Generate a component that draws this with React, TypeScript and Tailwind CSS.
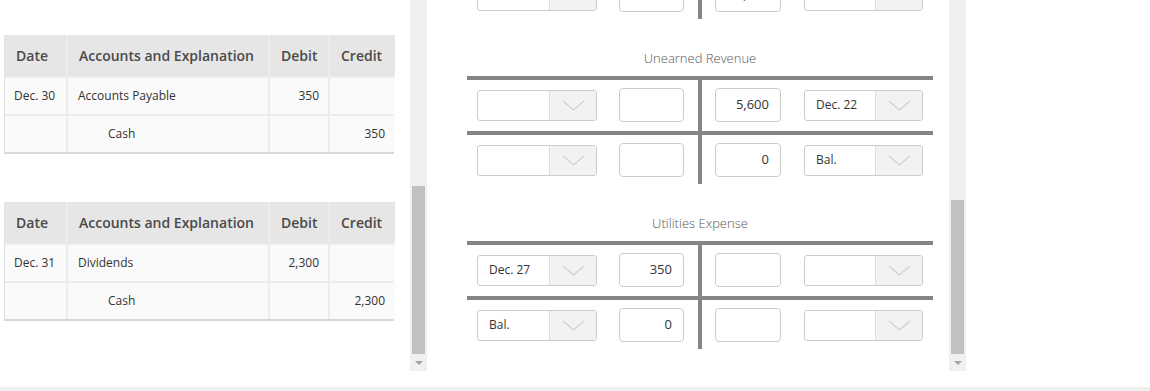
import React from "react";

type Entry = {
  date: string;
  account: string;
  debit: string;
  credit: string;
  indent?: boolean;
};

type TRow = {
  leftDate?: string;
  leftAmount?: string;
  rightAmount?: string;
  rightDate?: string;
};

const journal: Entry[][] = [
  [
    { date: "Dec. 30", account: "Accounts Payable", debit: "350", credit: "" },
    { date: "", account: "Cash", debit: "", credit: "350", indent: true },
  ],
  [
    { date: "Dec. 31", account: "Dividends", debit: "2,300", credit: "" },
    { date: "", account: "Cash", debit: "", credit: "2,300", indent: true },
  ],
];

// the first account is scrolled mostly out of view, only its last row peeks in
const accounts: { id: string; title: string; rows: TRow[] }[] = [
  {
    id: "cash",
    title: "",
    rows: [{}, { rightAmount: "5,600" }],
  },
  {
    id: "unearned",
    title: "Unearned Revenue",
    rows: [
      { rightAmount: "5,600", rightDate: "Dec. 22" },
      { rightAmount: "0", rightDate: "Bal." },
    ],
  },
  {
    id: "utilities",
    title: "Utilities Expense",
    rows: [
      { leftDate: "Dec. 27", leftAmount: "350" },
      { leftDate: "Bal.", leftAmount: "0" },
    ],
  },
];

const JournalTable = ({ entries }: { entries: Entry[] }) => (
  <div className="w-[390px] grid grid-cols-[61px_200px_58px_65px] gap-[2px] bg-[#ececec] border-l border-[#e2e2e2] border-b-2 border-b-[#d8d8d8]">
    {["Date", "Accounts and Explanation", "Debit", "Credit"].map((h) => (
      <div
        key={h}
        className="h-[41px] bg-[#e6e6e6] flex items-center px-[11px] text-[14px] font-semibold text-[#4a4a4a]"
      >
        {h}
      </div>
    ))}
    {entries.map((e, i) => (
      <React.Fragment key={i}>
        <div className="h-[36px] bg-[#fafafa] flex items-center pl-[9px] text-[12px] text-[#333]">{e.date}</div>
        <div
          className={`h-[36px] bg-[#fafafa] flex items-center text-[12px] text-[#333] ${e.indent ? "pl-[40px]" : "pl-[10px]"}`}
        >
          {e.account}
        </div>
        <div className="h-[36px] bg-[#fafafa] flex items-center justify-end pr-[9px] text-[12px] text-[#333]">{e.debit}</div>
        <div className="h-[36px] bg-[#fafafa] flex items-center justify-end pr-[10px] text-[12px] text-[#333]">{e.credit}</div>
      </React.Fragment>
    ))}
  </div>
);

const DateSelect = ({ value = "", width = "w-[120px]" }: { value?: string; width?: string }) => (
  <div className={`${width} h-[31px] flex border border-[#cccccc] rounded-[3px] bg-white overflow-hidden`}>
    <div className="flex-1 flex items-center pl-[11px] text-[12px] text-[#333]">{value}</div>
    <div className="w-[47px] bg-[#f2f2f2] border-l border-[#dddddd] flex items-center justify-center">
      <svg width="23" height="11" viewBox="0 0 23 11" fill="none">
        <polyline points="1,1 11.5,10 22,1" stroke="#cfcfcf" strokeWidth="1.1" />
      </svg>
    </div>
  </div>
);

const AmountBox = ({ value = "", width = "w-[65px]" }: { value?: string; width?: string }) => (
  <div
    className={`${width} h-[34px] border border-[#cccccc] rounded-[4px] bg-white flex items-center justify-end pr-[11px] text-[13px] text-[#333]`}
  >
    {value}
  </div>
);

const TAccount = ({ title, rows }: { title: string; rows: TRow[] }) => (
  <div className="w-[466px]">
    <div className="h-[57px] flex items-end justify-center pb-[9px] text-[13px] leading-[18px] font-light text-[#555]">
      {title}
    </div>
    {rows.map((r, i) => (
      <div key={i}>
        <div className="h-[4px] bg-[#858585]" />
        <div className={`flex ${i === rows.length - 1 ? "h-[49px]" : "h-[51px]"}`}>
          <div className="w-[231px] pt-[8px] pl-[10px] flex items-start">
            <div className="h-[34px] flex items-center">
              <DateSelect value={r.leftDate} />
            </div>
            <div className="ml-[22px]">
              <AmountBox value={r.leftAmount} />
            </div>
          </div>
          <div className="w-[4px] bg-[#858585]" />
          <div className="w-[231px] pt-[8px] pl-[13px] flex items-start">
            <AmountBox value={r.rightAmount} width="w-[66px]" />
            <div className="ml-[23px] h-[34px] flex items-center">
              <DateSelect value={r.rightDate} width="w-[119px]" />
            </div>
          </div>
        </div>
      </div>
    ))}
  </div>
);

const ScrollTrack = ({ thumbTop, thumbHeight }: { thumbTop: number; thumbHeight: number }) => (
  <div className="w-[17px] h-[371px] bg-[#f0f0f0] flex flex-col shrink-0">
    <div style={{ height: thumbTop }} />
    <div className="mx-[2px] bg-[#c1c1c1]" style={{ height: thumbHeight }} />
    <div className="flex-1 flex items-center justify-center">
      <div className="w-0 h-0 border-l-[4px] border-r-[4px] border-t-[4px] border-l-transparent border-r-transparent border-t-[#a3a3a3]" />
    </div>
  </div>
);

export default function App() {
  return (
    <div className="w-[1150px] h-[391px] bg-white flex flex-col overflow-hidden font-['Open_Sans',sans-serif]">
      <div className="h-[387px] flex">
        <div className="w-[410px] shrink-0 pl-[4px] pt-[35px] flex flex-col gap-[48px]">
          {journal.map((entries, i) => (
            <JournalTable key={i} entries={entries} />
          ))}
        </div>
        <ScrollTrack thumbTop={186} thumbHeight={168} />
        <div className="w-[522px] shrink-0 h-[387px] overflow-hidden pl-[40px]">
          <div className="mt-[-146px]">
            {accounts.map((a) => (
              <TAccount key={a.id} title={a.title} rows={a.rows} />
            ))}
          </div>
        </div>
        <ScrollTrack thumbTop={200} thumbHeight={154} />
        <div className="flex-1" />
      </div>
      <div className="h-[4px] bg-[#f0f0f0]" />
    </div>
  );
}
